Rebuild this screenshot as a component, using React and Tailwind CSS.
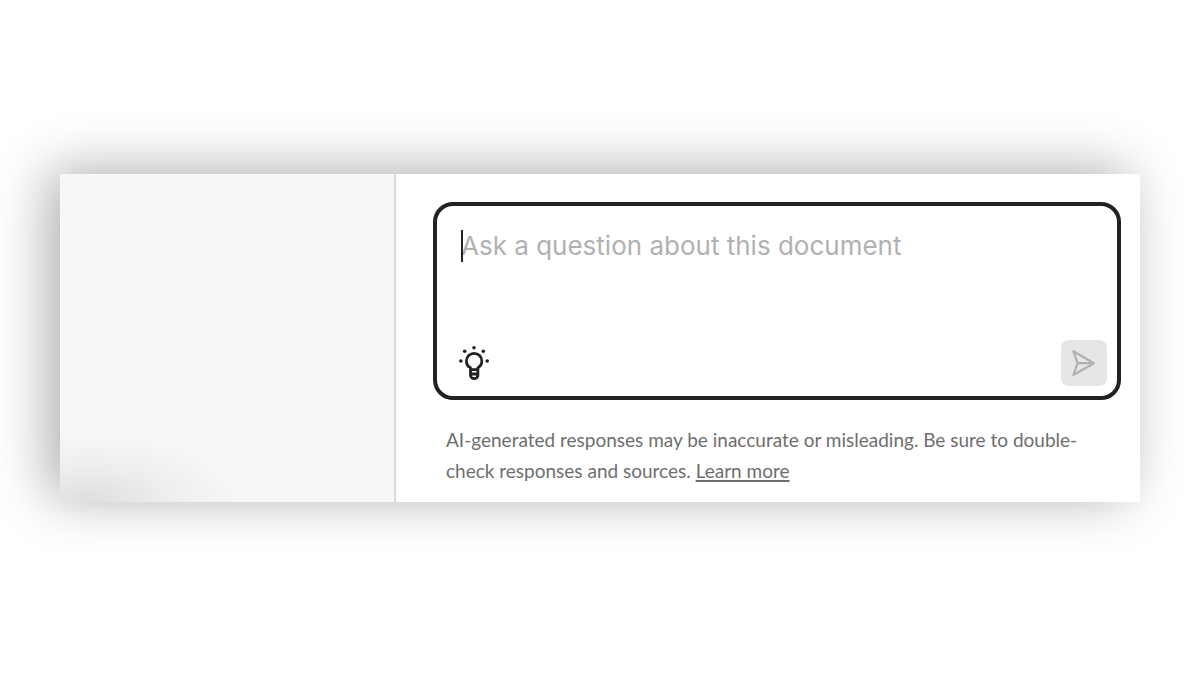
import { useState } from 'react'

function LightbulbIcon() {
  return (
    <svg width="36" height="40" viewBox="0 0 36 40" fill="none" aria-hidden="true">
      <g fill="#222222">
        <circle cx="18" cy="4.7" r="1.8" />
        <circle cx="8.7" cy="8.3" r="1.8" />
        <circle cx="27.3" cy="8.3" r="1.8" />
        <circle cx="4.9" cy="18" r="1.8" />
        <circle cx="31.2" cy="18" r="1.8" />
      </g>
      <path
        d="M14.5 26.7V24.8C11.9 23.5 10.4 20.9 10.4 18A7.7 7.7 0 0 1 25.8 18C25.8 20.9 24.3 23.5 21.9 24.8V26.7M14.5 26.7H21.9V32.2A3.7 3.4 0 0 1 14.5 32.2ZM14.5 31H21.9"
        stroke="#222222"
        strokeWidth="2.8"
        strokeLinejoin="round"
      />
    </svg>
  )
}

function SendIcon() {
  return (
    <svg width="46" height="46" viewBox="0 0 46 46" fill="none" aria-hidden="true">
      <path
        d="M12.4 11.2L33 23.2L12.4 35L16.6 23.2ZM16.6 23.2H33"
        stroke="#b1b1b1"
        strokeWidth="2.2"
        strokeLinejoin="round"
      />
    </svg>
  )
}

export default function App() {
  const [question, setQuestion] = useState('')

  return (
    <div className="flex min-h-screen items-center bg-white px-[60px]">
      <div className="flex w-full bg-white shadow-[-12px_-4px_52px_-1px_rgba(0,0,0,0.33)]">
        {/* Document side */}
        <aside className="w-[336px] shrink-0 border-r-2 border-[#dadada] bg-[#f7f7f7] bg-[radial-gradient(ellipse_150px_70px_at_30px_100%,rgba(0,0,0,0.1),rgba(0,0,0,0.04)_50%,transparent)]" />

        {/* Assistant side */}
        <main className="min-w-0 flex-1 pt-7 pr-[19px] pb-4 pl-[37px]">
          <form
            onSubmit={(e) => e.preventDefault()}
            className="rounded-[20px] border-4 border-[#222222] pt-6 pb-2.5"
          >
            <div className="relative px-6">
              <textarea
                rows={3}
                aria-label="Ask a question"
                placeholder="Ask a question about this document"
                value={question}
                onChange={(e) => setQuestion(e.target.value)}
                className="block w-full resize-none bg-transparent font-['Inter',sans-serif] text-[26px] leading-8 text-[#222222] outline-none placeholder:text-[#b1b1b1]"
              />
              {/* Text cursor */}
              {!question && <span className="absolute top-0 left-6 h-8 w-0.5 bg-[#222222]" />}
            </div>
            <div className="mt-3.5 flex items-center justify-between pr-2.5 pl-[19px]">
              <button type="button" aria-label="Suggested questions">
                <LightbulbIcon />
              </button>
              <button type="submit" aria-label="Send" className="rounded-lg bg-[#e6e6e6]">
                <SendIcon />
              </button>
            </div>
          </form>

          <p className="mt-6 pr-4 pl-[13px] font-['Lato',sans-serif] text-[19px] leading-[31px] text-[#6e6e6e]">
            AI-generated responses may be inaccurate or misleading. Be sure to double-check responses and sources.{' '}
            <a href="#learn-more" className="underline decoration-2 underline-offset-2">Learn more</a>
          </p>
        </main>
      </div>
    </div>
  )
}
